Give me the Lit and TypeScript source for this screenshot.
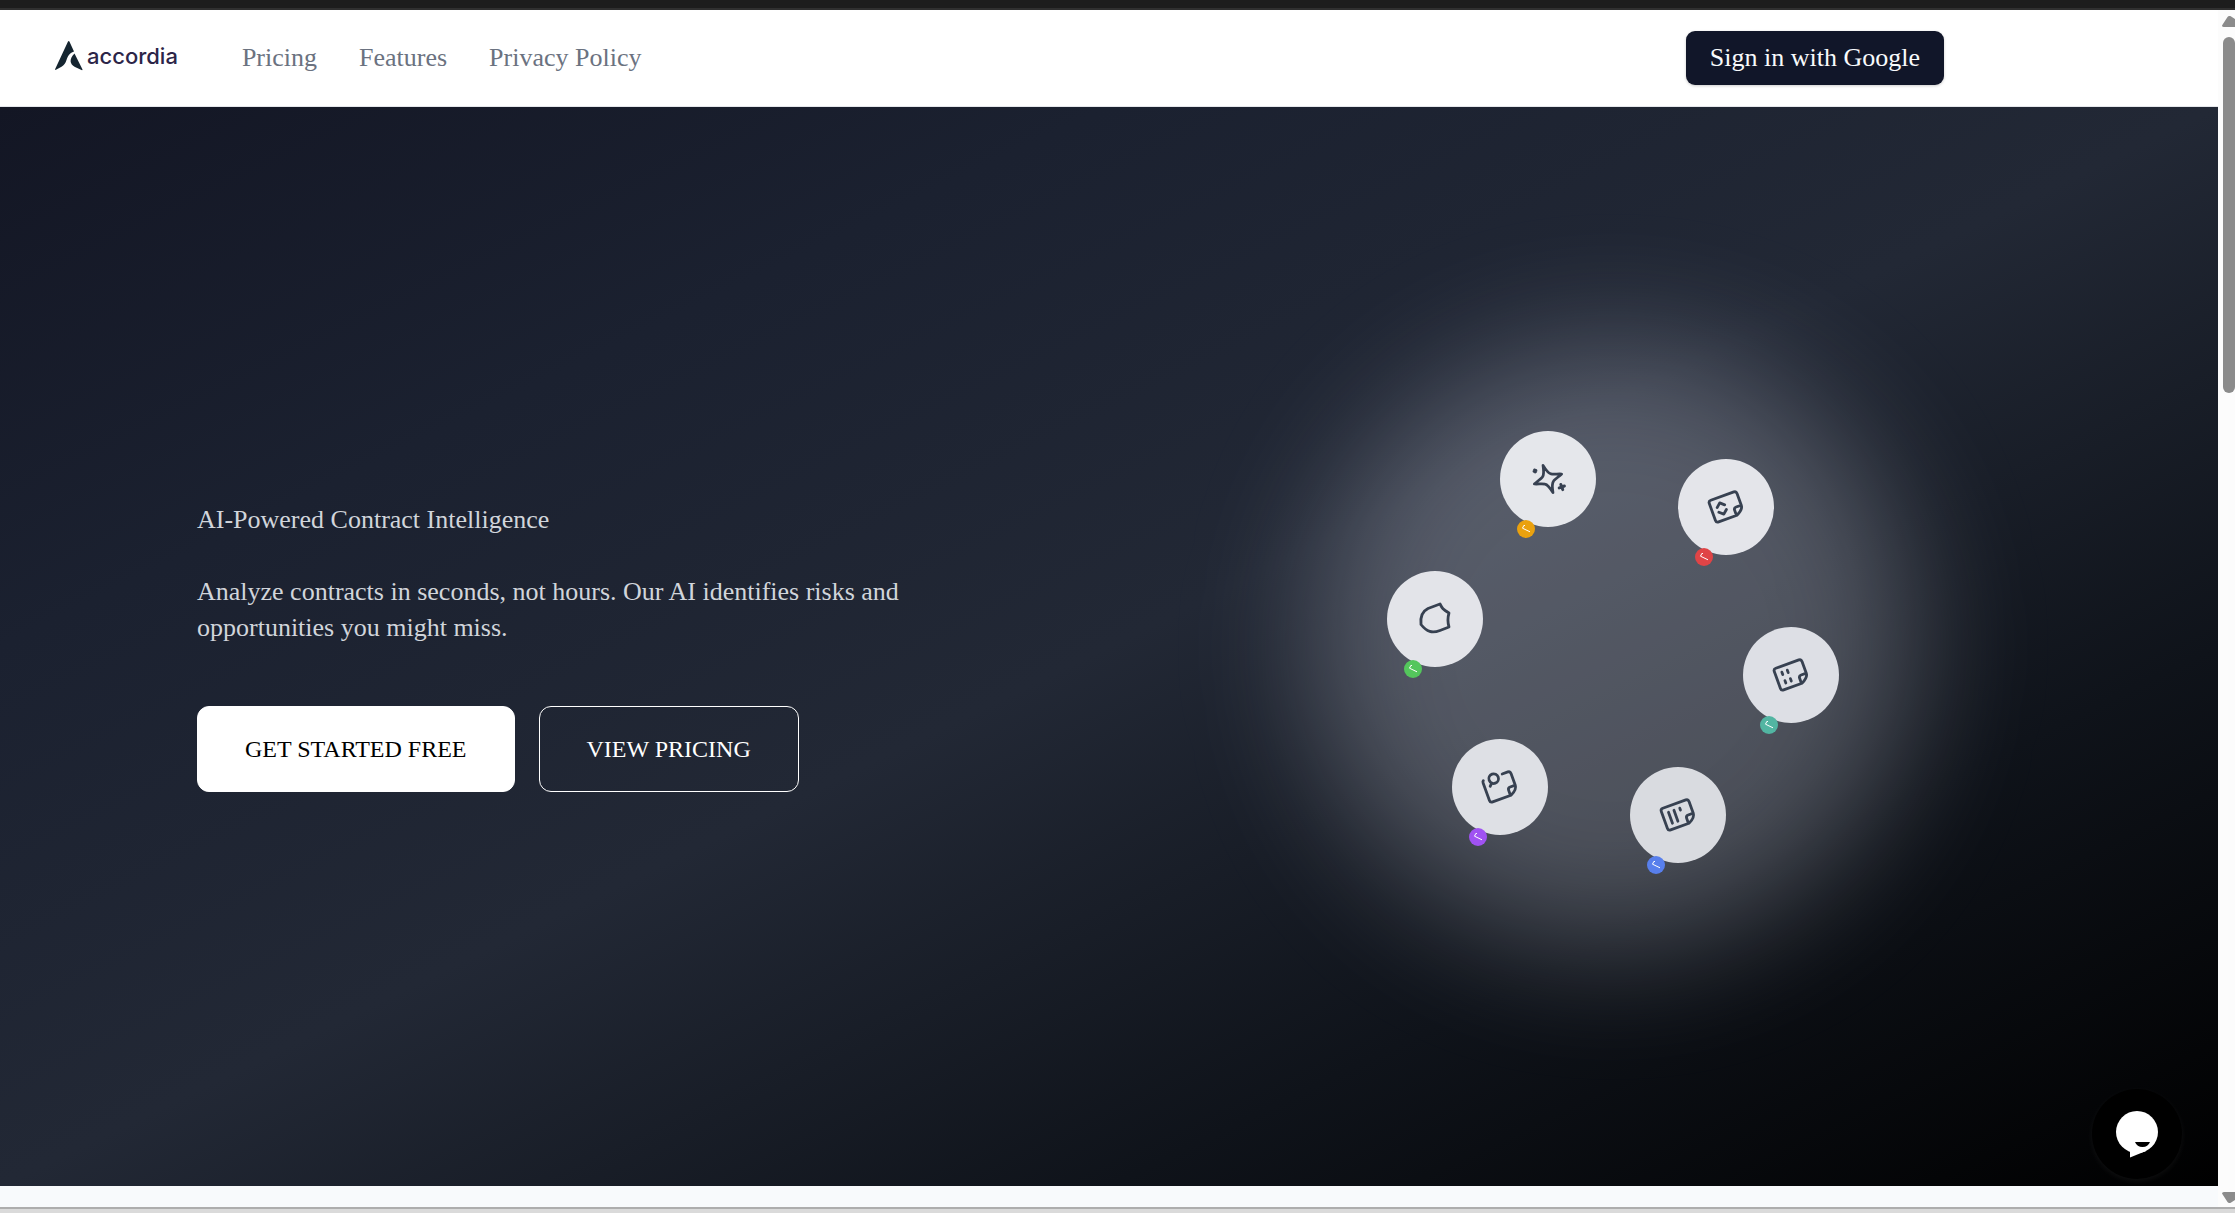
import { LitElement, html, css, svg, type SVGTemplateResult } from "lit";
import { customElement, property } from "lit/decorators.js";

type IconName = "sparkles" | "code" | "grid" | "list" | "search" | "shape";

interface OrbitItem {
  icon: IconName;
  label: string;
  color: string;
  x: number;
  y: number;
  fill: string;
}

const ORBIT: OrbitItem[] = [
  { icon: "sparkles", label: "Insights", color: "#eaa10e", x: -65, y: -168, fill: "#e5e7eb" },
  { icon: "code", label: "Clauses", color: "#e04446", x: 113, y: -140, fill: "#e4e5ea" },
  { icon: "grid", label: "Tables", color: "#52b5a2", x: 178, y: 28, fill: "#dddfe5" },
  { icon: "list", label: "Summary", color: "#587fec", x: 65, y: 168, fill: "#d9dbe0" },
  { icon: "search", label: "Review", color: "#a052f2", x: -113, y: 140, fill: "#dee0e5" },
  { icon: "shape", label: "Coverage", color: "#54c65c", x: -178, y: -28, fill: "#e3e4e9" },
];

const sheet = svg`<path d="M15 3.500V-9a2.500 2.500 0 0 0-2.500-2.500h-24.500a2.500 2.500 0 0 0-2.500 2.500V9a2.500 2.500 0 0 0 2.500 2.500H7.500Q15 8 15 3.500H9.500A2.500 2.500 0 0 0 7 6v5.500"/>`;

const ICONS: Record<IconName, SVGTemplateResult> = {
  sparkles: svg`<g transform="rotate(-20)">
    <path d="M0-14.500C1.500-7 2.500-5 4.500-3.800C6.500-2.500 11-1.500 14.500 0C11 1.500 6.500 2.500 4.500 3.800C2.500 5 1.500 7 0 14.500C-1.500 7-2.500 5-4.500 3.800C-6.500 2.500-11 1.500-14.500 0C-11-1.500-6.500-2.500-4.500-3.800C-2.500-5-1.500-7 0-14.500Z"/>
    <path d="M10.200 9.500v5.500M7.500 12.200h5.500M-9.500-13v2M-10.500-12h2" stroke-width="3"/></g>`,
  code: svg`<g transform="rotate(-20)">${sheet}<path d="M-8.500-2.500L-4.500-6L-.5-2.500M-8.500 2.500L-4.500 6L-.5 2.500"/></g>`,
  grid: svg`<g transform="rotate(-20)">${sheet}<path d="M-7.600-5.800v2.600M-1.800-5.800v2.600M-7.600 3.200v2.600M-1.800 3.200v2.600"/></g>`,
  list: svg`<g transform="rotate(-20)">${sheet}<path d="M-8-5.800V5.800M-2.200-5.800V5.800M4-5.800v2"/></g>`,
  search: svg`<g transform="rotate(-20)">
    <path d="M6.500-11.500h6A2.500 2.500 0 0 1 15-9V3.500Q15 8 7.500 11.500H-12A2.500 2.500 0 0 1-14.500 9V-9.500Q-14.500-11-13.500-11.700M15 3.500H9.500A2.500 2.500 0 0 0 7 6v5.500"/>
    <circle cx="-3.100" cy="-10" r="4.800"/><path d="M-6.500-6.500l-2.500 2.500"/></g>`,
  shape: svg`<path d="M5-15C7-11 8-9.500 14-6C12.500-1 12.500 3 14 8L5 11.500C-3 14.500-8 13-14 5.500C-15-3-12-8-7-10.500Z"/>`,
};

@customElement("orbit-node")
export class OrbitNode extends LitElement {
  @property({ attribute: false }) item!: OrbitItem;

  static styles = css`
    :host { display: block; width: 96px; height: 96px; }
    .disc { display: grid; place-items: center; width: 96px; height: 96px; border-radius: 50%; }
    .icon {
      width: 40px; height: 40px; fill: none; stroke: #374151; stroke-width: 2.800;
      stroke-linecap: round; stroke-linejoin: round; overflow: visible;
    }
    .badge {
      position: absolute; left: 17px; top: 89px; width: 18px; height: 18px;
      border-radius: 50%;
    }
    .tick { display: block; width: 18px; height: 18px; fill: none; stroke: #fff; stroke-width: 1; }
  `;

  render() {
    const { icon, label, color, fill } = this.item;
    return html`
      <div class="disc" style="background:${fill}" role="img" aria-label=${label}>
        <svg class="icon" viewBox="-20 -20 40 40">${ICONS[icon]}</svg>
      </div>
      <span class="badge" style="background:${color}">
        <svg class="tick" viewBox="-9 -9 18 18" aria-hidden="true"><path d="M-1-3.500H-2.200L-3.500-.8L4 2.800"/></svg>
      </span>`;
  }
}

@customElement("app-root")
export class AppRoot extends LitElement {
  static styles = css`
    :host {
      display: flex; flex-direction: column; min-height: 100vh; box-sizing: border-box;
      font-family: "Liberation Serif", serif; font-size: 26px; line-height: 36px;
      background: #fff;
    }
    * { box-sizing: border-box; }
    .frame-top { height: 10px; background: #1d1d1d; border-bottom: 2px solid #303030; flex: none; }
    .frame-bottom { height: 6px; background: #dadada; border-top: 2px solid #adadad; flex: none; }
    .window { flex: 1; display: flex; }
    .page { flex: 1; min-width: 0; display: flex; flex-direction: column; position: relative; }

    .header {
      display: flex; align-items: center; height: 97px; padding: 0 274px 0 55px;
      background: #fff; border-bottom: 1px solid #e5e7eb;
    }
    .logo { display: flex; align-items: center; gap: 4px; color: #2c2548; text-decoration: none; margin-bottom: 4px; }
    .mark { width: 28px; height: 30px; fill: #152530; }
    .word { font: 500 22px/30px "Inter", sans-serif; }
    .nav { display: flex; gap: 42px; margin-left: 64px; flex: 1; }
    .nav a { color: #6b7280; text-decoration: none; }
    .signin {
      height: 54px; padding: 0 24px; border: 0; border-radius: 9px; background: #111629; color: #f8fafc;
      font: inherit; box-shadow: 0 1px 3px rgb(0 0 0 / 20%);
    }

    .hero {
      flex: 1; display: grid; align-items: center; padding: 0 48px; overflow: hidden;
      background: linear-gradient(to bottom right, #131624, #1b2130 25%, #222835 50%, #0f131a 75%, #000);
    }
    .inner {
      display: grid; grid-template-columns: 1fr 1fr; align-items: center; gap: 192px;
      width: 100%; max-width: 1824px; margin: 0 auto;
    }
    .copy { color: #d1d5db; }
    .title { margin: 0 0 36px; font: inherit; }
    .lead { margin: 0 0 60px; }
    .actions { display: flex; gap: 24px; }
    .btn {
      display: grid; place-items: center; height: 86px; padding: 0 47px; border-radius: 12px;
      border: 1px solid #fff; color: #fff; text-decoration: none; white-space: nowrap; font-size: 24px;
    }
    .primary { background: #fff; color: #000; }

    .orbit { position: relative; height: 600px; width: 600px; justify-self: center; }
    .glow { position: absolute; inset: 0; border-radius: 50%; background: rgb(238 242 255 / 27%); filter: blur(64px); }
    .node { position: absolute; margin: -48px 0 0 -48px; }

    .next { height: 21px; background: #f8fafc; }

    .chat {
      position: absolute; right: 36px; bottom: 28px; width: 90px; height: 90px; padding: 0;
      border: 0; border-radius: 50%; background: #000; box-shadow: 0 2px 6px rgb(255 255 255 / 6%);
    }
    .bubble { display: block; width: 90px; height: 90px; }

    .scroll {
      width: 17px; flex: none; display: flex; flex-direction: column; align-items: flex-end;
      background: #fcfcfc; padding: 6px 0 4px;
    }
    .arrow { width: 13px; height: 11px; fill: #8b8b8b; flex: none; }
    .thumb { width: 12px; height: 30%; margin: 10px 0 auto; border-radius: 6px; background: #8b8b8b; }
  `;

  render() {
    return html`
      <div class="frame-top"></div>
      <div class="window">
        <div class="page">
          <header class="header">
            <a class="logo" href="#home">
              <svg class="mark" viewBox="0 0 28 30" aria-hidden="true">
                <path d="M13 .5Q13.700-.5 14.400.5L19 10.500C14 12.500 13 15 11.500 19C10.500 22 9 24.500 6.500 25.700L.5 29Q0 29 .2 28Z" />
                <path d="M19.500 12.500L27.500 28.500Q27.500 29.500 26.500 29L20 26C14.500 23 14 18 19.500 12.500Z" />
              </svg>
              <span class="word">accordia</span>
            </a>
            <nav class="nav">
              <a href="#pricing">Pricing</a>
              <a href="#features">Features</a>
              <a href="#privacy">Privacy Policy</a>
            </nav>
            <button class="signin" type="button">Sign in with Google</button>
          </header>
          <section class="hero">
            <div class="inner">
              <div class="copy">
                <h1 class="title">AI-Powered Contract Intelligence</h1>
                <p class="lead">Analyze contracts in seconds, not hours. Our AI identifies risks and opportunities you might miss.</p>
                <div class="actions">
                  <a class="btn primary" href="#start">GET STARTED FREE</a>
                  <a class="btn" href="#pricing">VIEW PRICING</a>
                </div>
              </div>
              <div class="orbit">
                <div class="glow"></div>
                ${ORBIT.map(
                  (item) => html`<orbit-node class="node" .item=${item}
                    style="left:calc(50% + ${item.x}px);top:calc(50% + ${item.y}px)"></orbit-node>`,
                )}
              </div>
            </div>
          </section>
          <div class="next"></div>
          <button class="chat" type="button" aria-label="Open chat">
            <svg class="bubble" viewBox="-45 -45 90 90" aria-hidden="true">
              <circle cy="-2" r="21" fill="#fff" /><path d="M-7 17V23.500L9 17Z" fill="#fff" />
              <path d="M-2 8H13Q11 13 5.500 13T-2 8Z" fill="#000" />
            </svg>
          </button>
        </div>
        <div class="scroll" aria-hidden="true">
          <svg class="arrow" viewBox="0 0 13 11"><path d="M0 9.500Q0 11 2 11H13V3L9.500.8Q7.500-1 5.500 1Z" /></svg>
          <div class="thumb"></div>
          <svg class="arrow" viewBox="0 0 13 11"><path d="M0 1.500Q0 0 2 0H13V8L9.500 10.200Q7.500 12 5.500 10Z" /></svg>
        </div>
      </div>
      <div class="frame-bottom"></div>`;
  }
}
